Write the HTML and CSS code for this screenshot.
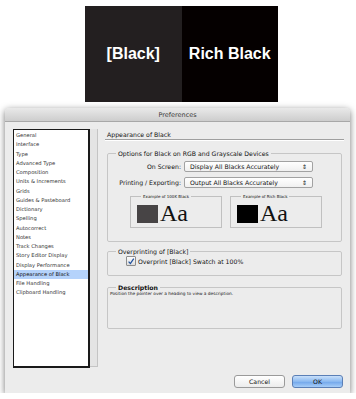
FILE: index.html
```html
<!DOCTYPE html>
<html lang="en">
	<head>
		<meta charset="UTF-8" />
		<title>Preferences - Appearance of Black</title>
		<link rel="stylesheet" href="styles.css">
	</head>
	<body>
		<div class="banner">
			<div class="banner-half plain">[Black]</div>
			<div class="banner-half rich">Rich Black</div>
		</div>

		<div class="dialog">
			<div class="titlebar">Preferences</div>
			<div class="dialog-body">
				<div class="sidebar">
					<ul class="pref-list">
						<li>General</li>
						<li>Interface</li>
						<li>Type</li>
						<li>Advanced Type</li>
						<li>Composition</li>
						<li>Units &amp; Increments</li>
						<li>Grids</li>
						<li>Guides &amp; Pasteboard</li>
						<li>Dictionary</li>
						<li>Spelling</li>
						<li>Autocorrect</li>
						<li>Notes</li>
						<li>Track Changes</li>
						<li>Story Editor Display</li>
						<li>Display Performance</li>
						<li class="selected">Appearance of Black</li>
						<li>File Handling</li>
						<li>Clipboard Handling</li>
					</ul>
				</div>

				<div class="panel">
					<div class="panel-title">Appearance of Black</div>

					<fieldset class="group options">
						<legend>Options for Black on RGB and Grayscale Devices</legend>
						<div class="form-grid">
							<label>On Screen:</label>
							<div class="select">Display All Blacks Accurately<span class="arrows">&#8661;</span></div>
							<label>Printing / Exporting:</label>
							<div class="select">Output All Blacks Accurately<span class="arrows">&#8661;</span></div>
						</div>
						<div class="examples">
							<fieldset class="example">
								<legend>Example of 100K Black</legend>
								<span class="chip gray"></span><span class="aa">Aa</span>
							</fieldset>
							<fieldset class="example">
								<legend>Example of Rich Black</legend>
								<span class="chip black"></span><span class="aa">Aa</span>
							</fieldset>
						</div>
					</fieldset>

					<fieldset class="group overprint">
						<legend>Overprinting of [Black]</legend>
						<div class="check-row">
							<span class="checkbox">
								<svg width="9" height="9" viewBox="0 0 9 9"><path d="M1.8 4.6 L3.8 6.8 L7.6 1.2" fill="none" stroke="#1d4f9c" stroke-width="1.4"/></svg>
							</span>
							Overprint [Black] Swatch at 100%
						</div>
					</fieldset>

					<fieldset class="group description">
						<legend>Description</legend>
						<div class="desc-text">Position the pointer over a heading to view a description.</div>
					</fieldset>

					<div class="buttons">
						<button class="btn">Cancel</button>
						<button class="btn primary">OK</button>
					</div>
				</div>
			</div>
		</div>
	</body>
</html>
```

FILE: styles.css
```css
body {
	margin: 0;
	background: #fff;
	font-family: "DejaVu Sans", "Liberation Sans", sans-serif;
	color: #111;
}

.banner {
	display: flex;
	width: 193px;
	height: 96px;
	margin: 6px 0 0 85px;
}
.banner-half {
	flex: 1;
	display: flex;
	align-items: center;
	justify-content: center;
	color: #fff;
	font-family: "Liberation Sans", Arial, sans-serif;
	font-weight: bold;
	font-size: 16px;
}
.plain {
	background: #231f20;
}
.rich {
	background: #050000;
}

.dialog {
	margin: 6px 6px 0 5px;
	height: 285px;
	background: #ececec;
	border-radius: 4px 4px 0 0;
	box-shadow: 0 2px 7px rgba(0, 0, 0, 0.55);
	display: flex;
	flex-direction: column;
}
.titlebar {
	height: 13px;
	line-height: 14px;
	text-align: center;
	font-size: 6.5px;
	color: #3a3a3a;
	background: linear-gradient(#e9e9e9, #cdcdcd);
	border-radius: 4px 4px 0 0;
	border-bottom: 1px solid #a8a8a8;
}
.dialog-body {
	flex: 1;
	display: flex;
	padding: 7px 6px 0 8px;
	gap: 7px;
}

.sidebar {
	width: 77px;
	height: 237px;
	padding-right: 7px;
	background: #e4e4e4;
	border: 1px solid #c4c4c4;
	border-left: none;
	border-top: none;
}
.pref-list {
	list-style: none;
	margin: 0;
	padding: 1px 0 0 0;
	height: 235px;
	background: #fff;
	border: 1px solid #1a1a1a;
	border-right-width: 2px;
	border-bottom-width: 2px;
	font-size: 5.2px;
}
.pref-list li {
	height: 9.25px;
	line-height: 9.25px;
	padding-left: 2px;
	color: #333;
}
.pref-list .selected {
	background: #b5d3fb;
	color: #111;
}

.panel {
	flex: 1;
	display: flex;
	flex-direction: column;
	font-size: 6.2px;
}
.panel-title {
	height: 9px;
	line-height: 9px;
	margin-top: 1px;
	padding-left: 2px;
	border-bottom: 1px solid #9f9f9f;
	box-shadow: 0 1px 0 #fff;
}

.group {
	margin: 0 2px;
	padding: 0 8px;
	border: 1px solid #c6c6c6;
	border-radius: 2px;
	min-width: 0;
}
.group legend {
	padding: 0 2px;
	margin-left: 0;
}
.options {
	margin-top: 10px;
	height: 86px;
	padding-top: 4px;
}
.form-grid {
	display: grid;
	grid-template-columns: 65px 129px;
	column-gap: 3px;
	row-gap: 5px;
	align-items: center;
}
.form-grid label {
	text-align: right;
}
.select {
	height: 9px;
	line-height: 9px;
	padding: 0 5px;
	background: linear-gradient(#fff, #f0f0f0);
	border: 1px solid #a2a2a2;
	border-radius: 2px;
	display: flex;
	justify-content: space-between;
}
.arrows {
	font-size: 6px;
}

.examples {
	display: flex;
	gap: 8px;
	margin: 6px 0 0 14px;
}
.example {
	width: 92px;
	height: 34px;
	box-sizing: border-box;
	margin: 0;
	padding: 0 6px;
	border: 1px solid #c0c0c0;
	display: flex;
	align-items: center;
	font-size: 4px;
}
.example legend {
	font-size: 4px;
	padding: 0 2px;
	margin-left: 4px;
}
.chip {
	width: 21px;
	height: 18px;
	margin-top: 2px;
}
.chip.gray {
	background: #474445;
}
.chip.black {
	background: #000;
}
.aa {
	font-family: "Liberation Serif", "Times New Roman", serif;
	font-size: 24px;
	line-height: 24px;
	margin-left: 2px;
	color: #111;
}

.overprint {
	margin-top: 6px;
	height: 25px;
	padding-top: 1px;
}
.check-row {
	display: flex;
	align-items: center;
	gap: 2px;
	margin-left: 10px;
}
.checkbox {
	width: 8px;
	height: 8px;
	background: linear-gradient(#fdfdfd, #dcdcdc);
	border: 1px solid #8c8c8c;
	border-radius: 1px;
	display: flex;
	align-items: center;
	justify-content: center;
}

.description {
	margin-top: 8px;
	height: 43px;
}
.description legend {
	font-weight: bold;
}
.desc-text {
	font-size: 4.3px;
	margin-left: -6px;
}

.buttons {
	display: flex;
	justify-content: flex-end;
	gap: 7px;
	margin: 46px 1px 0 0;
}
.btn {
	width: 51px;
	height: 13px;
	padding: 0;
	font-family: inherit;
	font-size: 6.2px;
	border: 1px solid #9a9a9a;
	border-radius: 3px;
	background: linear-gradient(#fff, #ececec);
	color: #111;
}
.btn.primary {
	border-color: #5b7fb6;
	background: linear-gradient(#c9e0fa, #8bb9f0 50%, #6fa5ea 51%, #a7cdf8);
}
```
